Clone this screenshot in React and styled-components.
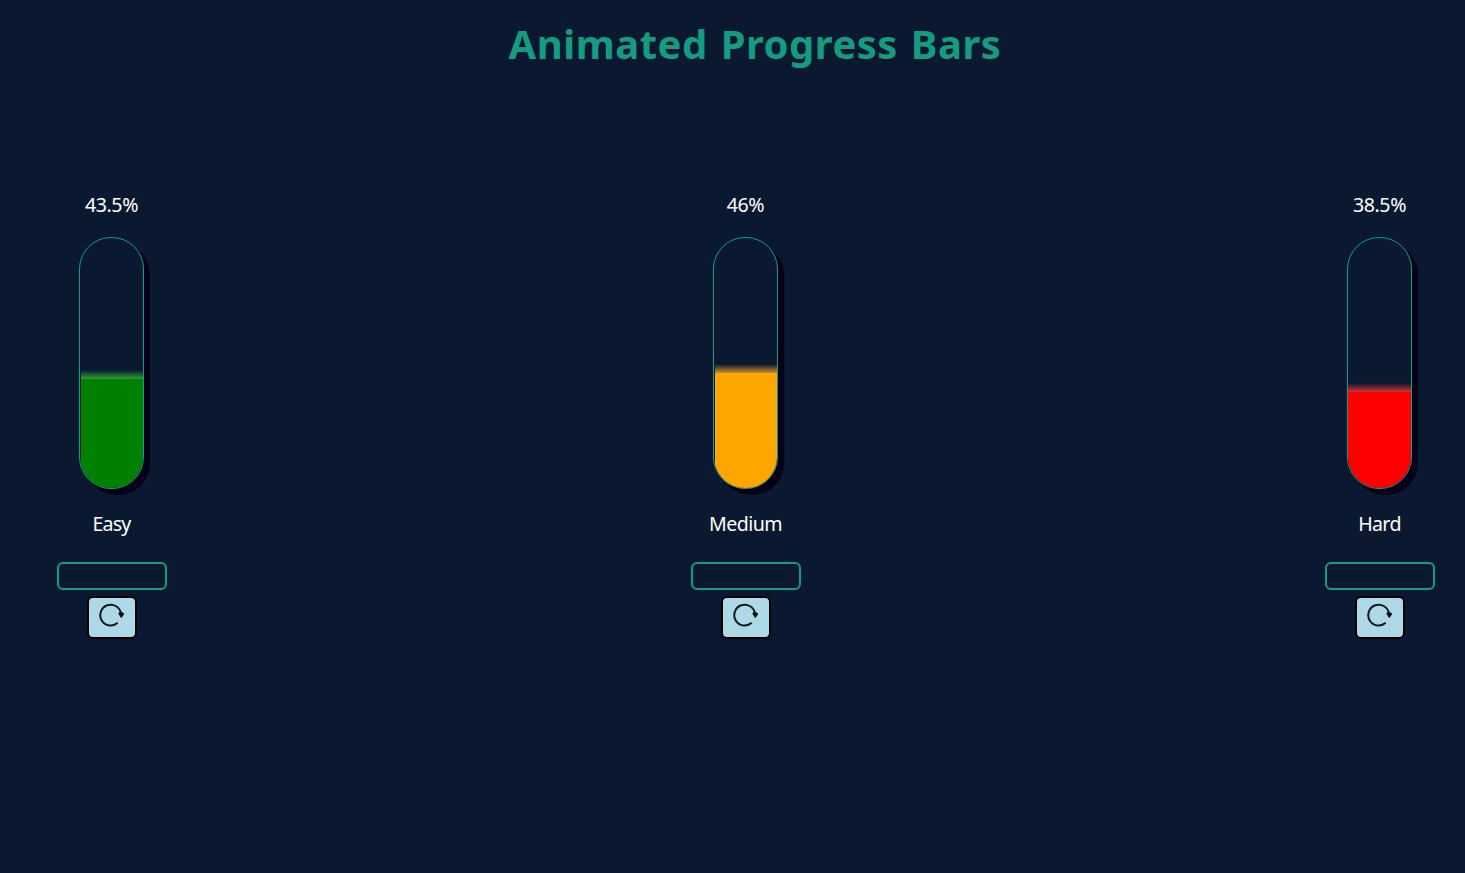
import React from "react";
import styled, { createGlobalStyle } from "styled-components";

const GlobalStyle = createGlobalStyle`
  * { box-sizing: border-box; }
  body {
    margin: 0;
    background: #0a192f;
    color: #fff;
    font-family: "Segoe UI", "Noto Sans", sans-serif;
    overflow: hidden;
  }
`;

const Page = styled.main`
  height: 873px;
  padding: 15px 30px 0 57px;
`;

const Title = styled.h1`
  margin: 0 0 0 18px;
  height: 60px;
  line-height: 58px;
  font-size: 40px;
  font-weight: 700;
  letter-spacing: 0.5px;
  word-spacing: 2px;
  text-align: center;
  white-space: nowrap;
  color: #149c80;
`;

const Bars = styled.section`
  display: flex;
  justify-content: space-between;
  margin-top: 116px;
`;

const Column = styled.article`
  width: 110px;
  display: flex;
  flex-direction: column;
  align-items: center;
`;

const Text = styled.p`
  margin: 0 1px 0 0;
  height: 28px;
  line-height: 28px;
  font-size: 19.6px;
  letter-spacing: ${(p) => p.$spacing || "0"};
  white-space: nowrap;
`;

const Tube = styled.div`
  width: 65px;
  height: 252px;
  margin: 18px 1px 21px 0;
  padding-left: ${(p) => p.$inset}px;
  border: 1px solid #149c80;
  border-radius: 32px;
  box-shadow: 6px 6px 1px #040019;
  overflow: hidden;
  display: flex;
  flex-direction: column;
  justify-content: flex-end;
`;

const Glow = styled.div`
  height: 9px;
  flex: none;
  background: linear-gradient(to top, ${(p) => p.$color}, transparent);
`;

const Fill = styled.div`
  flex: none;
  background: ${(p) => p.$color};
`;

const Field = styled.input`
  width: 110px;
  height: 28px;
  margin-top: 24px;
  padding: 0 8px;
  border: 2px solid #149c80;
  border-radius: 6px;
  background: transparent;
  color: #fff;
  outline: none;
`;

const ResetButton = styled.button`
  width: 50px;
  height: 43px;
  margin-top: 6px;
  padding: 0 2px 5px 0;
  border: 2px solid #000;
  border-radius: 6px;
  background: lightblue;
  display: flex;
  align-items: center;
  justify-content: center;
`;

const ResetIcon = () => (
  <svg width="28" height="28" viewBox="0 0 28 28" fill="none">
    <path d="M20.7 21.8A10.4 10.4 0 1 1 24 12.7" stroke="#111a1d" strokeWidth="2" />
    <path d="M21.7 12.4L24 11L26.8 12.9L24.3 16.5Z" fill="#080c0e" stroke="#080c0e" strokeWidth="1" strokeLinejoin="round" />
  </svg>
);

const bars = [
  { label: "Easy", value: 43.5, color: "green", glow: "rgba(50,165,50,.95)", inset: 1, spacing: "-.8px" },
  { label: "Medium", value: 46, color: "orange", glow: "rgba(225,155,40,.9)", inset: 1, spacing: "-.55px" },
  { label: "Hard", value: 38.5, color: "red", glow: "rgba(235,50,50,.9)", inset: 0, spacing: "-.65px" },
];

export default function App() {
  return (
    <>
      <GlobalStyle />
      <Page>
        <Title>Animated Progress Bars</Title>
        <Bars>
          {bars.map((bar) => (
            <Column key={bar.label}>
              <Text $spacing="-.4px">{bar.value}%</Text>
              <Tube $inset={bar.inset}>
                <Glow $color={bar.glow} />
                <Fill $color={bar.color} style={{ height: `${bar.value}%` }} />
              </Tube>
              <Text $spacing={bar.spacing}>{bar.label}</Text>
              <Field aria-label={bar.label} />
              <ResetButton aria-label={`Reset ${bar.label}`}>
                <ResetIcon />
              </ResetButton>
            </Column>
          ))}
        </Bars>
      </Page>
    </>
  );
}
